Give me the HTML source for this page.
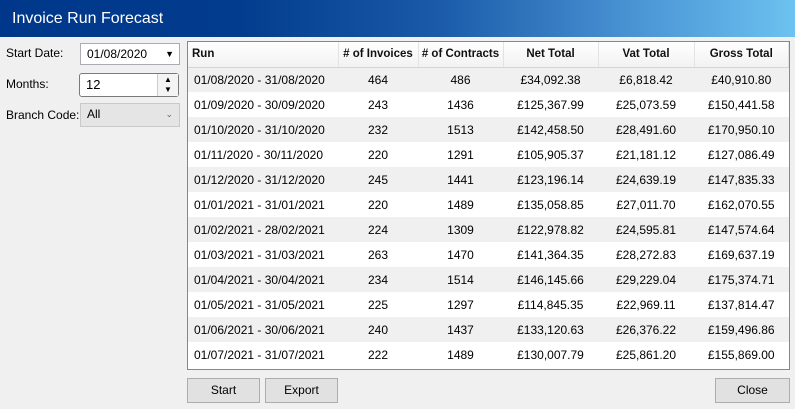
<!DOCTYPE html>
<html><head><style>
*{box-sizing:border-box;margin:0;padding:0}
body{width:795px;height:409px;background:#f0f0f0;font-family:"Liberation Sans",sans-serif;font-size:12px;color:#000;position:relative;overflow:hidden}
.title{position:absolute;left:0;top:0;width:795px;height:37px;background:linear-gradient(90deg,#00378a 0%,#023c8e 30%,#1a5aa8 55%,#4a94d4 80%,#6cc2f0 100%);color:#fff;font-size:16px;padding:10px 0 0 12px}
.lbl{position:absolute;left:6px}
.box{position:absolute;border:1px solid #abadb3;background:#fff;padding-left:6px;line-height:20px}
.grid{position:absolute;left:187px;top:41px;width:603px;height:329px;border:1px solid #828790;background:#fff;overflow:hidden}
table{border-collapse:collapse;width:601px}
th{height:25px;font-weight:bold;background:linear-gradient(#fff,#f2f2f2);border-right:1px solid #e2e3e5;border-bottom:1px solid #d5d5d5;text-align:center;font-size:11.5px;color:#111}
th:first-child{text-align:left;padding-left:4px}
td{height:25px;text-align:center;font-size:12px}
td:first-child{text-align:left;padding-left:6px}
tr.g td{background:#f0f0f0}
.btn{position:absolute;top:378px;height:25px;border:1px solid #adadad;background:#e1e1e1;text-align:center;line-height:23px}
</style></head><body>
<div class="title">Invoice Run Forecast</div>
<div class="lbl" style="top:46px">Start Date:</div>
<div class="box" style="left:80px;top:43px;width:100px;height:22px">01/08/2020<span style="position:absolute;right:5px;top:0;font-size:9px">▼</span></div>
<div class="lbl" style="top:77px">Months:</div>
<div class="box" style="left:79px;top:73px;width:100px;height:24px;border-radius:3px;border-color:#7a7a7a;font-size:13px;line-height:22px">12
<div style="position:absolute;left:77px;top:0;width:21px;height:22px;border-left:1px solid #ccc;background:#f4f4f4;font-size:8px;line-height:10px;text-align:center;padding-top:1px">▲<br>▼</div></div>
<div class="lbl" style="top:108px">Branch Code:</div>
<div class="box" style="left:80px;top:103px;width:100px;height:24px;background:#e5e5e5;border-color:#c9c9c9">All<span style="position:absolute;right:6px;top:0;font-size:9px;color:#666">⌄</span></div>
<div class="grid"><table>
<tr><th style="width:150px">Run</th><th style="width:80px"># of Invoices</th><th style="width:85px"># of Contracts</th><th style="width:95px">Net Total</th><th style="width:96px">Vat Total</th><th>Gross Total</th></tr>
<tr class="g"><td>01/08/2020 - 31/08/2020</td><td>464</td><td>486</td><td>£34,092.38</td><td>£6,818.42</td><td>£40,910.80</td></tr>
<tr><td>01/09/2020 - 30/09/2020</td><td>243</td><td>1436</td><td>£125,367.99</td><td>£25,073.59</td><td>£150,441.58</td></tr>
<tr class="g"><td>01/10/2020 - 31/10/2020</td><td>232</td><td>1513</td><td>£142,458.50</td><td>£28,491.60</td><td>£170,950.10</td></tr>
<tr><td>01/11/2020 - 30/11/2020</td><td>220</td><td>1291</td><td>£105,905.37</td><td>£21,181.12</td><td>£127,086.49</td></tr>
<tr class="g"><td>01/12/2020 - 31/12/2020</td><td>245</td><td>1441</td><td>£123,196.14</td><td>£24,639.19</td><td>£147,835.33</td></tr>
<tr><td>01/01/2021 - 31/01/2021</td><td>220</td><td>1489</td><td>£135,058.85</td><td>£27,011.70</td><td>£162,070.55</td></tr>
<tr class="g"><td>01/02/2021 - 28/02/2021</td><td>224</td><td>1309</td><td>£122,978.82</td><td>£24,595.81</td><td>£147,574.64</td></tr>
<tr><td>01/03/2021 - 31/03/2021</td><td>263</td><td>1470</td><td>£141,364.35</td><td>£28,272.83</td><td>£169,637.19</td></tr>
<tr class="g"><td>01/04/2021 - 30/04/2021</td><td>234</td><td>1514</td><td>£146,145.66</td><td>£29,229.04</td><td>£175,374.71</td></tr>
<tr><td>01/05/2021 - 31/05/2021</td><td>225</td><td>1297</td><td>£114,845.35</td><td>£22,969.11</td><td>£137,814.47</td></tr>
<tr class="g"><td>01/06/2021 - 30/06/2021</td><td>240</td><td>1437</td><td>£133,120.63</td><td>£26,376.22</td><td>£159,496.86</td></tr>
<tr><td>01/07/2021 - 31/07/2021</td><td>222</td><td>1489</td><td>£130,007.79</td><td>£25,861.20</td><td>£155,869.00</td></tr>
</table></div>
<div class="btn" style="left:187px;width:73px">Start</div>
<div class="btn" style="left:265px;width:73px">Export</div>
<div class="btn" style="left:715px;width:75px">Close</div>
</body></html>
